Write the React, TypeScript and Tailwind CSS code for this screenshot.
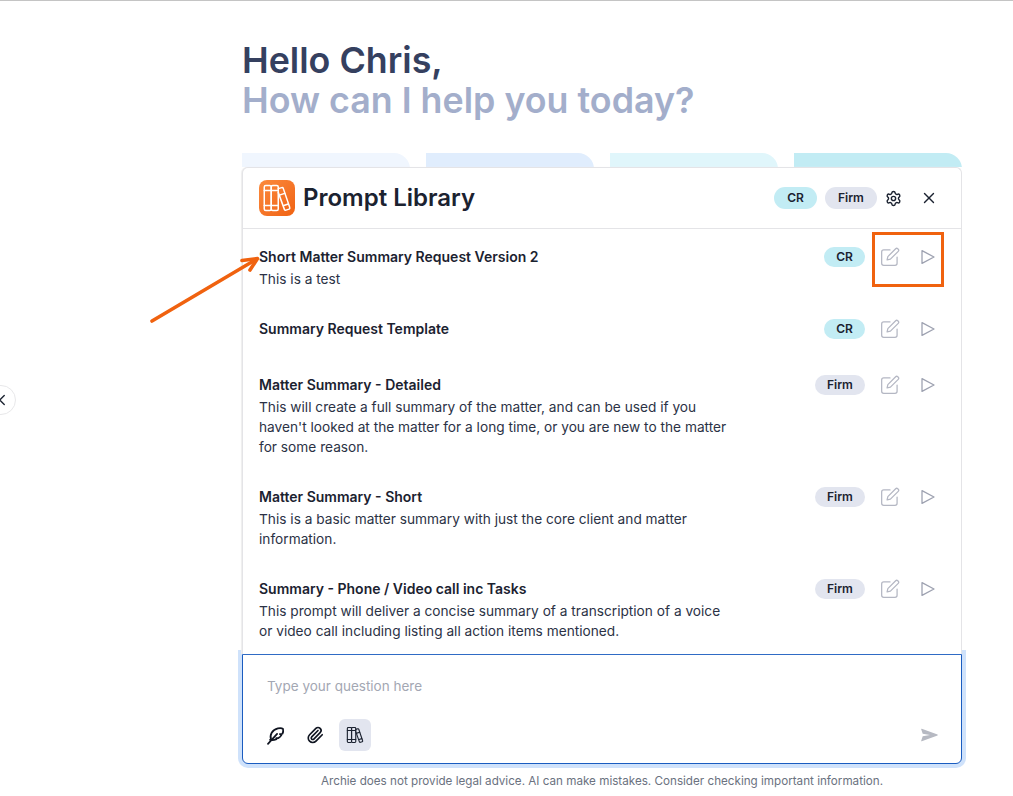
import React from "react";
import { Settings, X, ChevronLeft, Paperclip } from "lucide-react";

function Books({ className, strokeWidth = 1.6 }: { className?: string; strokeWidth?: number }) {
  return (
    <svg viewBox="0 0 24 24" fill="none" stroke="currentColor" strokeWidth={strokeWidth} strokeLinecap="round" strokeLinejoin="round" className={className}>
      <rect x="1.800" y="2" width="5.600" height="20" rx="1.200" />
      <rect x="7.400" y="2" width="5.600" height="20" rx="1.200" />
      <path d="M1.800 6h5.600M1.800 18h5.600M7.400 6h5.600M7.400 18h5.600" />
      <path d="M13 4.500l2.800-.8a1 1 0 0 1 1.200.6l5.200 15.300a1 1 0 0 1-.6 1.300l-2.400.8a1 1 0 0 1-1.300-.6L13 7.500" />
      <path d="M14.500 9.500l3.700-1.200M17.500 18l3.500-1.200" />
    </svg>
  );
}

function Feather({ className }: { className?: string }) {
  return (
    <svg viewBox="0 0 24 24" fill="none" stroke="currentColor" strokeWidth={2.200} strokeLinecap="round" strokeLinejoin="round" className={className}>
      <path d="M2.500 22.500L14 10" />
      <path d="M6.500 17.500C4 11.500 8 4.500 15 3c2.800-.6 5.300-.3 6.500.7.500 2.300.2 4.300-.7 6.100l-3.300.4 2 1.300c-.9 1.400-2.300 2.700-3.800 3.700l-2.700.1.300 1.300c-2.800 1.200-5.700 1.700-8.300.8z" />
    </svg>
  );
}

function Send({ className }: { className?: string }) {
  return (
    <svg viewBox="0 0 18 14" fill="currentColor" className={className}>
      <path d="M0.800 0.300 L17.500 6.400 Q18 7 17.500 7.600 L0.800 13.700 Q0 13.800 0.200 13 L1.800 8.300 L9.500 7 L1.800 5.700 L0.200 1 Q0 0.200 0.800 0.300 Z" />
    </svg>
  );
}

function PenIcon({ className }: { className?: string }) {
  return (
    <svg viewBox="0 0 24 24" fill="none" stroke="currentColor" strokeWidth={1.500} strokeLinecap="round" strokeLinejoin="round" className={className}>
      <path d="M12 3.500H4.500a2.500 2.500 0 0 0-2.500 2.500v13.500a2.500 2.500 0 0 0 2.500 2.500H18a2.500 2.500 0 0 0 2.500-2.500V12" />
      <path d="M8.500 15.500l.9-4L18.800 2.100a1.800 1.800 0 0 1 2.500 0l.6.6a1.800 1.800 0 0 1 0 2.500l-9.400 9.400z" />
    </svg>
  );
}

function PlayIcon({ className }: { className?: string }) {
  return (
    <svg viewBox="0 0 24 24" fill="none" stroke="currentColor" strokeWidth={1.900} strokeLinejoin="round" className={className}>
      <path d="M3 2.500L21 12 3 21.500z" />
    </svg>
  );
}

function Arrow({ className }: { className?: string }) {
  return (
    <svg viewBox="0 0 112 68" fill="none" stroke="#f0620f" strokeWidth={3.600} strokeLinecap="round" strokeLinejoin="round" className={className}>
      <path d="M3 65 L107 3.500" />
      <path d="M93 4.500 L108.500 2.500 L101 14" />
    </svg>
  );
}

function Pill({ label, large }: { label: string; large?: boolean }) {
  const tone = label === "CR" ? "bg-[#c2ecf4]" : "bg-[#e2e5ef]";
  const size = large
    ? label === "CR" ? "w-[43px] h-[22px]" : "w-[52px] h-[22px]"
    : label === "CR" ? "w-[41px] h-[20px]" : "w-[50px] h-[20px]";
  return (
    <span className={`${tone} ${size} rounded-full flex items-center justify-center text-[12px] font-semibold text-[#1b2230]`}>
      {label}
    </span>
  );
}

const prompts: { title: string; lines?: string[]; tag: string; extra?: string }[] = [
  { title: "Short Matter Summary Request Version 2", lines: ["This is a test"], tag: "CR" },
  { title: "Summary Request Template", tag: "CR", extra: "min-h-[26px]" },
  {
    title: "Matter Summary - Detailed",
    lines: [
      "This will create a full summary of the matter, and can be used if you",
      "haven't looked at the matter for a long time, or you are new to the matter",
      "for some reason.",
    ],
    tag: "Firm",
  },
  {
    title: "Matter Summary - Short",
    lines: ["This is a basic matter summary with just the core client and matter", "information."],
    tag: "Firm",
  },
  {
    title: "Summary - Phone / Video call inc Tasks",
    lines: [
      "This prompt will deliver a concise summary of a transcription of a voice",
      "or video call including listing all action items mentioned.",
    ],
    tag: "Firm",
  },
];

export default function App() {
  return (
    <div className="relative h-[796px] w-[1013px] overflow-hidden bg-white border-t border-[#c4c4c4] font-['Inter',sans-serif]">
      <button className="absolute left-[-16px] top-[384px] w-[32px] h-[30px] rounded-full bg-white border border-[#e8e8ea] flex items-center justify-center">
        <ChevronLeft className="w-[18px] h-[18px] text-[#1b2230] ml-[4px]" strokeWidth={1.800} />
      </button>

      <main className="ml-[242px] w-[720px] flex flex-col">
        <h1 className="mt-[39px] text-[35.800px] leading-[40px] font-semibold text-[#35405f]">Hello Chris,</h1>
        <h2 className="text-[35.800px] leading-[40px] font-semibold text-[#a3aecb]">How can I help you today?</h2>

        <div className="mt-[33px] h-[14px] grid grid-cols-4 gap-[16px] overflow-hidden">
          <div className="h-[40px] rounded-tr-[16px] bg-[#f0f6fe]" />
          <div className="h-[40px] rounded-tr-[16px] bg-[#e0edfd]" />
          <div className="h-[40px] rounded-tr-[16px] bg-[#e0f6fb]" />
          <div className="h-[40px] rounded-tr-[16px] bg-[#c2ecf4]" />
        </div>

        <section className="relative z-10 h-[487px] rounded-t-[6px] bg-white border-x border-t border-[#e4e4e7] shadow-[-1px_0_1px_#eeeeee] flex flex-col">
          <header className="h-[61px] shrink-0 border-b border-[#e4e4e7] pl-[16px] pr-[23px] flex items-center">
            <div className="w-[36px] h-[36px] rounded-[8px] bg-gradient-to-br from-[#fb8a3c] to-[#f0620f] flex items-center justify-center">
              <Books className="w-[30px] h-[30px] text-white" strokeWidth={1.200} />
            </div>
            <span className="ml-[8px] text-[24px] font-semibold leading-[32px] text-[#1b2230]">Prompt Library</span>
            <div className="ml-auto flex items-center">
              <Pill label="CR" large />
              <div className="ml-[8px]"><Pill label="Firm" large /></div>
              <Settings className="ml-[8px] w-[17px] h-[17px] text-[#1b2230]" strokeWidth={2} />
              <X className="ml-[18px] w-[18px] h-[18px] text-[#1b2230]" strokeWidth={1.800} />
            </div>
          </header>

          <div className="pt-[18px] pl-[16px] pr-[25px] flex flex-col gap-[30px]">
            {prompts.map((p) => (
              <div key={p.title} className={`flex items-start justify-between ${p.extra ?? ""}`}>
                <div>
                  <div className="text-[14px] leading-[20px] font-semibold text-[#1b2230]">{p.title}</div>
                  {p.lines && (
                    <div className="mt-[2px] text-[13.700px] leading-[20px] text-[#2b3245]">
                      {p.lines.map((l) => (
                        <div key={l}>{l}</div>
                      ))}
                    </div>
                  )}
                </div>
                <div className="flex items-center h-[20px]">
                  <Pill label={p.tag} />
                  <PenIcon className="ml-[15px] w-[20px] h-[20px] text-[#b4b7c3]" />
                  <PlayIcon className="ml-[20px] w-[16px] h-[16px] text-[#9da1b0]" />
                </div>
              </div>
            ))}
          </div>
        </section>

        <section className="relative h-[110px] rounded-b-[6px] bg-white border border-[#1a5cc0] shadow-[0_0_0_4px_#cfe2fb]">
          <div className="pt-[21px] pl-[24px] text-[13.500px] leading-[20px] text-[#a3a7b3]">Type your question here</div>
          <div className="mt-[23px] pl-[16px] pr-[23px] flex items-center">
            <div className="w-[32px] h-[32px] flex items-center justify-center">
              <Feather className="w-[19px] h-[19px] text-[#0f1420]" />
            </div>
            <div className="ml-[8px] w-[32px] h-[32px] flex items-center justify-center">
              <Paperclip className="w-[18px] h-[18px] text-[#0f1420]" strokeWidth={2.200} />
            </div>
            <div className="ml-[8px] w-[32px] h-[32px] rounded-[6px] bg-[#e2e5ef] flex items-center justify-center">
              <Books className="w-[18px] h-[18px] text-[#1b2230]" strokeWidth={1.500} />
            </div>
            <Send className="ml-auto w-[17px] h-[14px] text-[#b6b9c2]" />
          </div>
        </section>

        <p className="mt-[9px] text-center text-[11.660px] leading-[16px] text-[#6b7280]">
          Archie does not provide legal advice. AI can make mistakes. Consider checking important information.
        </p>
      </main>

      <div className="absolute z-20 left-[872px] top-[231px] w-[72px] h-[55px] border-[3px] border-[#f0620f]" />
      <Arrow className="absolute z-20 left-[149px] top-[255px] w-[112px] h-[68px]" />
    </div>
  );
}
